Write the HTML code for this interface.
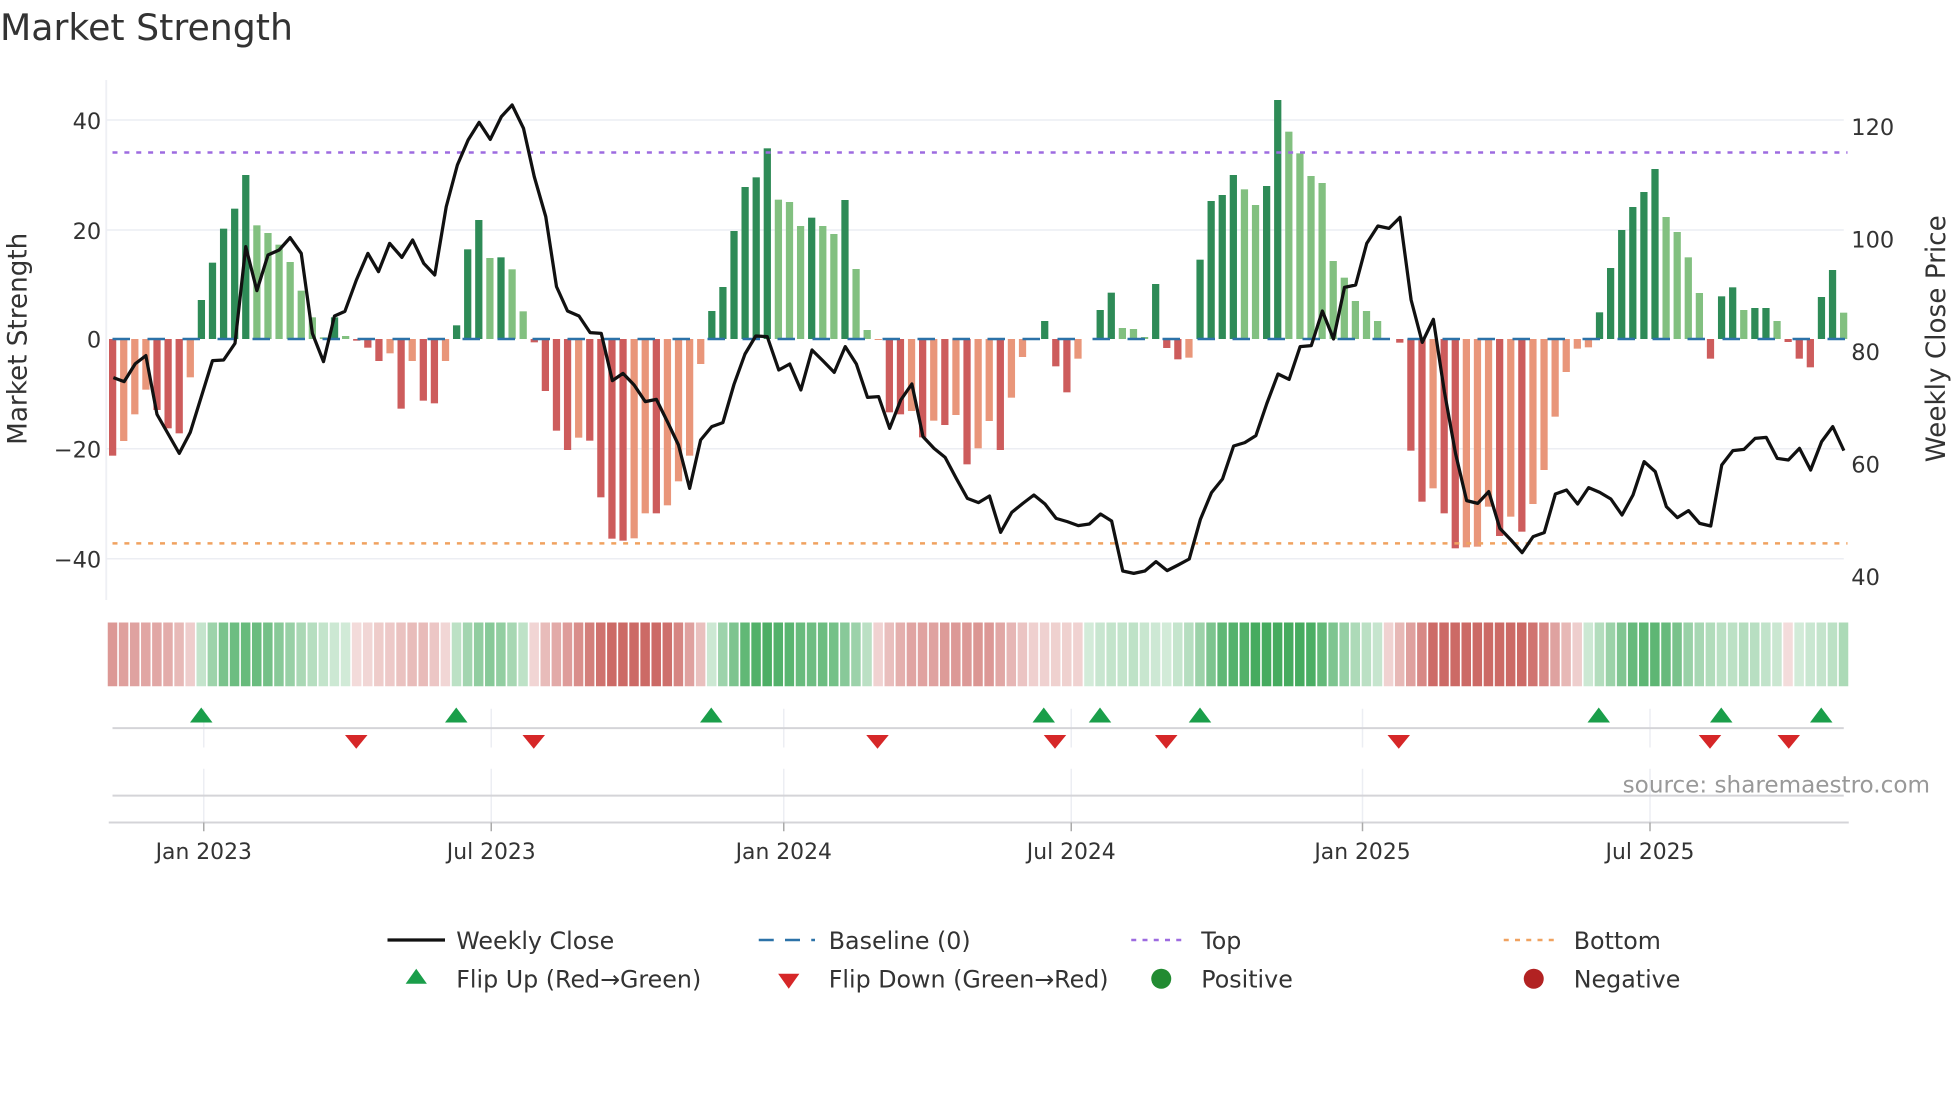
<!DOCTYPE html>
<html><head><meta charset="utf-8"><style>
html,body{margin:0;padding:0;background:#fff;width:1960px;height:1102px;overflow:hidden}
svg{display:block}
text{font-family:"DejaVu Sans","Liberation Sans",sans-serif}
</style></head><body>
<svg id="s" width="1960" height="1102" viewBox="0 0 1568 881.6" xmlns="http://www.w3.org/2000/svg">
<rect width="1568" height="882" fill="#fff"/>
<text x="0" y="32" font-size="29" fill="#333">Market Strength</text>
<line x1="85" y1="64" x2="85" y2="480" stroke="#eef0f4" stroke-width="1.5"/>
<g stroke="#eceef3" stroke-width="1.2">
<line x1="85" y1="96" x2="1475" y2="96"/>
<line x1="85" y1="184" x2="1475" y2="184"/>
<line x1="85" y1="359" x2="1475" y2="359"/>
<line x1="85" y1="447" x2="1475" y2="447"/>
</g>
<g font-size="18" fill="#333" text-anchor="end">
<text x="81" y="103">40</text><text x="81" y="191">20</text><text x="81" y="278">0</text>
<text x="81" y="366">−20</text><text x="81" y="454">−40</text>
</g>
<g font-size="18" fill="#333">
<text x="1481" y="108">120</text><text x="1481" y="198">100</text><text x="1481" y="288">80</text>
<text x="1481" y="378">60</text><text x="1481" y="468">40</text>
</g>
<text transform="translate(21,271) rotate(-90)" font-size="21" fill="#333" text-anchor="middle">Market Strength</text>
<text transform="translate(1556,271) rotate(-90)" font-size="21" fill="#333" text-anchor="middle">Weekly Close Price</text>
<g id="bars"></g>
<line x1="90" y1="271.2" x2="1478" y2="271.2" stroke="#2c72a8" stroke-width="2" stroke-dasharray="14 14"/>
<line x1="90" y1="122" x2="1478" y2="122" stroke="#9d6be0" stroke-width="2" stroke-dasharray="4 5.5"/>
<line x1="90" y1="434.7" x2="1478" y2="434.7" stroke="#f0a260" stroke-width="2" stroke-dasharray="4 5.5"/>
<polyline id="price" fill="none" stroke="#111" stroke-width="2.6" stroke-linejoin="round"/>
<g id="heat"></g>
<g stroke="#eceef3" stroke-width="1.2">
<line x1="163" y1="567" x2="163" y2="598"/><line x1="393" y1="567" x2="393" y2="598"/>
<line x1="627" y1="567" x2="627" y2="598"/><line x1="857" y1="567" x2="857" y2="598"/>
<line x1="1090" y1="567" x2="1090" y2="598"/><line x1="1320" y1="567" x2="1320" y2="598"/>
<line x1="163" y1="615" x2="163" y2="658"/><line x1="393" y1="615" x2="393" y2="658"/>
<line x1="627" y1="615" x2="627" y2="658"/><line x1="857" y1="615" x2="857" y2="658"/>
<line x1="1090" y1="615" x2="1090" y2="658"/><line x1="1320" y1="615" x2="1320" y2="658"/>
</g>
<line x1="90" y1="582.5" x2="1475" y2="582.5" stroke="#d4d4d8" stroke-width="1.6"/>
<line x1="90" y1="636.5" x2="1475" y2="636.5" stroke="#d4d4d8" stroke-width="1.6"/>
<line x1="87" y1="658" x2="1479" y2="658" stroke="#d4d4d8" stroke-width="1.6"/>
<g stroke="#aaa" stroke-width="1.2">
<line x1="163" y1="658" x2="163" y2="665"/><line x1="393" y1="658" x2="393" y2="665"/>
<line x1="627" y1="658" x2="627" y2="665"/><line x1="857" y1="658" x2="857" y2="665"/>
<line x1="1090" y1="658" x2="1090" y2="665"/><line x1="1320" y1="658" x2="1320" y2="665"/>
</g>
<g id="marks"></g>
<text x="1544" y="634" font-size="18.5" fill="#999" text-anchor="end">source: sharemaestro.com</text>
<g font-size="17.5" fill="#333" text-anchor="middle">
<text x="163" y="687">Jan 2023</text><text x="393" y="687">Jul 2023</text>
<text x="627" y="687">Jan 2024</text><text x="857" y="687">Jul 2024</text>
<text x="1090" y="687">Jan 2025</text><text x="1320" y="687">Jul 2025</text>
</g>
<g font-size="19" fill="#333">
<line x1="310" y1="752" x2="356" y2="752" stroke="#111" stroke-width="2.6"/>
<text x="365" y="759">Weekly Close</text>
<line x1="607" y1="752" x2="652" y2="752" stroke="#2c72a8" stroke-width="2" stroke-dasharray="12 9"/>
<text x="663" y="759">Baseline (0)</text>
<line x1="905" y1="752" x2="950" y2="752" stroke="#9d6be0" stroke-width="2" stroke-dasharray="4 5"/>
<text x="961" y="759">Top</text>
<line x1="1203" y1="752" x2="1248" y2="752" stroke="#f0a260" stroke-width="2" stroke-dasharray="4 5"/>
<text x="1259" y="759">Bottom</text>
<polygon points="333,775 341.5,787 324.5,787" fill="#1a9e4a"/>
<text x="365" y="790">Flip Up (Red→Green)</text>
<polygon points="622.5,779 639.5,779 631,791" fill="#d62728"/>
<text x="663" y="790">Flip Down (Green→Red)</text>
<circle cx="929" cy="783" r="8" fill="#228b32"/>
<text x="961" y="790">Positive</text>
<circle cx="1227" cy="783" r="8" fill="#b22222"/>
<text x="1259" y="790">Negative</text>
</g>
</svg>
<script>
(function(){
var NS="http://www.w3.org/2000/svg";
var D=[[1127,'R'],[1083,'r'],[1003,'r'],[929,'r'],[990,'R'],[1045,'R'],[1060,'R'],[892,'r'],[660,'G'],[548,'G'],[446,'G'],[386,'G'],[285,'G'],[436,'g'],[459,'g'],[494,'g'],[546,'g'],[632,'g'],[712,'g'],[772,'g'],[712,'G'],[768,'g'],[782,'R'],[803,'R'],[843,'R'],[820,'r'],[986,'R'],[843,'r'],[962,'R'],[970,'R'],[843,'r'],[736,'G'],[508,'G'],[420,'G'],[534,'g'],[532,'G'],[568,'g'],[694,'g'],[787,'R'],[933,'R'],[1052,'R'],[1110,'R'],[1073,'r'],[1082,'R'],[1252,'R'],[1376,'R'],[1382,'R'],[1375,'r'],[1300,'r'],[1300,'R'],[1276,'r'],[1204,'r'],
[1127,'r'],[852,'r'],[693,'G'],[621,'G'],[453,'G'],[321,'G'],[292,'G'],[205,'G'],[359,'g'],[366,'g'],[438,'g'],[413,'G'],[438,'g'],[462,'g'],[360,'G'],[567,'g'],[750,'g'],[780,'r'],[997,'R'],[1003,'R'],[993,'r'],[1072,'R'],[1022,'r'],[1035,'R'],[1005,'r'],[1153,'R'],[1105,'r'],[1023,'r'],[1110,'R'],[953,'r'],[831,'r'],[777,'0'],[723,'G'],[859,'R'],[937,'R'],[836,'r'],[777,'0'],[690,'G'],[638,'G'],[744,'g'],[747,'g'],[771,'g'],[612,'G'],[804,'R'],[838,'R'],[833,'r'],[539,'G'],[363,'G'],[345,'G'],[285,'G'],[328,'g'],[375,'g'],
[318,'G'],[60,'G'],[155,'g'],[220,'g'],[288,'g'],[309,'g'],[543,'g'],[593,'g'],[663,'g'],[693,'g'],[723,'g'],[777,'0'],[788,'R'],[1112,'R'],[1265,'R'],[1225,'r'],[1300,'R'],[1405,'R'],[1402,'r'],[1400,'r'],[1280,'r'],[1368,'R'],[1310,'r'],[1355,'R'],[1272,'r'],[1170,'r'],[1010,'r'],[876,'r'],[806,'r'],[802,'r'],[697,'G'],[564,'G'],[450,'G'],[381,'G'],[336,'G'],[267,'G'],[411,'g'],[456,'g'],[532,'g'],[639,'g'],[836,'R'],[649,'G'],[622,'G'],[690,'g'],[684,'G'],[684,'G'],[723,'g'],[786,'R'],[836,'R'],[862,'R'],[651,'G'],[570,'G'],[698,'g']];
var col={G:'#2e8b57',g:'#82c080',R:'#cd5c5c',r:'#e9967a'};
var bars=document.getElementById('bars'),heat=document.getElementById('heat');
var x0=90.1,dx=8.877,zero=271.2;
var vals=D.map(function(d){return (777-d[0])/16.4;});
for(var i=0;i<D.length;i++){
 var cx=x0+dx*i, y=64+D[i][0]/3.75;
 if(D[i][1]!=='0'){
  var r=document.createElementNS(NS,'rect');
  var top=Math.min(y,zero),h=Math.max(Math.abs(y-zero),0.8);
  r.setAttribute('x',cx-2.9);r.setAttribute('y',top);r.setAttribute('width',5.8);r.setAttribute('height',h);
  r.setAttribute('fill',col[D[i][1]]);bars.appendChild(r);
 }
 var s=0,n=0;for(var k=-2;k<=2;k++){if(vals[i+k]!==undefined){s+=vals[i+k];n++;}}
 var v=s/n, t=Math.min(1,Math.abs(v)/30);
 var c=v>=0?[58,166,85]:[201,96,92];
 var a=0.22+0.72*t;
 var rr=Math.round(255+(c[0]-255)*a),gg=Math.round(255+(c[1]-255)*a),bb=Math.round(255+(c[2]-255)*a);
 var h2=document.createElementNS(NS,'rect');
 h2.setAttribute('x',cx-3.9);h2.setAttribute('y',498);h2.setAttribute('width',7.6);h2.setAttribute('height',51);
 h2.setAttribute('fill','rgb('+rr+','+gg+','+bb+')');heat.appendChild(h2);
}
var P=[[90.7,302.1],[99.3,305.3],[108.2,291],[116.7,284.5],[125.6,331.5],[143.4,362.7],[152.2,345.9],[170,288.5],[178.9,288],[188,274.7],[196.6,197.3],[205.5,232.5],[214.4,204],[223.3,200],[232.1,190.1],[241,202.7],[249.9,266.7],[258.8,289.3],[267.6,252.8],[275.9,249.1],[285.1,224],[294.3,202.7],[302.8,217.3],[311.7,194.7],[321.5,205.9],[330.1,192],[339,210.7],[347.8,220],[357,165.3],[365.9,132],[374.5,112],[383.3,97.9],[392.2,111.5],[401.1,93.3],[409.7,84],[418.8,102.7],[427.4,141.3],[436.6,173.3],[445.2,229.3],[454,248.8],[463.2,252.8],[472.1,266.1],[481,266.7],[489.9,304.5],[498.4,298.7],[507.3,308],[516.2,321.3],[525.1,319.5],[533.9,337.3],[542.8,356],[551.7,390.7],[560.5,352],[569.4,341.3],[578.3,338.1],[587.2,307.5],[596,283.2],[604.6,268.8],[613.8,269.3],[623,296],[631.8,291.2],[640.7,312],[649.6,280],[658.5,288.8],[667.4,297.9],[676.2,277.3],[685.1,291.2],[694,317.9],[702.9,317.3],[711.7,342.7],[720.6,320],[729.5,307.2],[738.4,349.3],[747.2,358.7],[756.1,365.9],[765,382.7],[773.9,398.7],[782.8,402.1],[791.6,396.8],[800.5,425.9],[809.4,409.9],[818.3,402.7],[827.1,396],[836,403.2],[844.9,414.7],[853.8,417.3],[862.6,420.5],[871.5,419.2],[880.4,411.2],[889.3,416.8],[898.2,456.8],[907,458.7],[915.9,456.8],[924.8,449.3],[933.7,456.5],[942.5,452],[951.4,447.2],[960.3,415.5],[969.2,394.1],[978,383.2],[986.9,356.8],[995.8,354.1],[1004.7,348.5],[1013.5,322.7],[1022.4,299.2],[1031.3,303.5],[1040.1,277.3],[1049,276.5],[1057.9,248.8],[1066.8,271.2],[1075.6,229.9],[1084.5,228],[1093.4,194.7],[1102.3,180.8],[1111.2,182.7],[1120,173.9],[1128.9,240],[1137.8,273.9],[1146.7,255.5],[1155.5,313.3],[1164.4,362.7],[1173.3,400.5],[1182.2,402.7],[1191,393.3],[1199.9,422.7],[1208.8,432],[1217.7,442.1],[1226.5,429.3],[1235.4,426.1],[1244.3,395.2],[1253.2,392],[1262.1,403.2],[1270.9,390.1],[1279.8,393.9],[1288.7,399.2],[1297.6,412],[1306.4,396],[1315.3,369.3],[1324.2,377.3],[1333.1,405.3],[1341.9,414.1],[1350.8,408.5],[1359.7,418.7],[1368.6,420.8],[1377.4,372],[1386.3,360.5],[1395.2,359.5],[1404.1,350.7],[1413,349.9],[1421.8,366.7],[1430.7,368],[1439.6,358.7],[1448.5,376],[1457.3,353.3],[1466.2,341.3],[1475.1,360.5]];
document.getElementById('price').setAttribute('points',P.map(function(p){return p[0]+','+p[1];}).join(' '));
var marks=document.getElementById('marks');
[161,365,569,835,880,960,1279,1377,1457].forEach(function(x){
 var p=document.createElementNS(NS,'polygon');p.setAttribute('points',x+',566 '+(x+9)+',578 '+(x-9)+',578');p.setAttribute('fill','#1a9e4a');marks.appendChild(p);});
[285,427,702,844,933,1119,1368,1431].forEach(function(x){
 var p=document.createElementNS(NS,'polygon');p.setAttribute('points',(x-9)+',588 '+(x+9)+',588 '+x+',599');p.setAttribute('fill','#d62728');marks.appendChild(p);});
})();
</script>
</body></html>
